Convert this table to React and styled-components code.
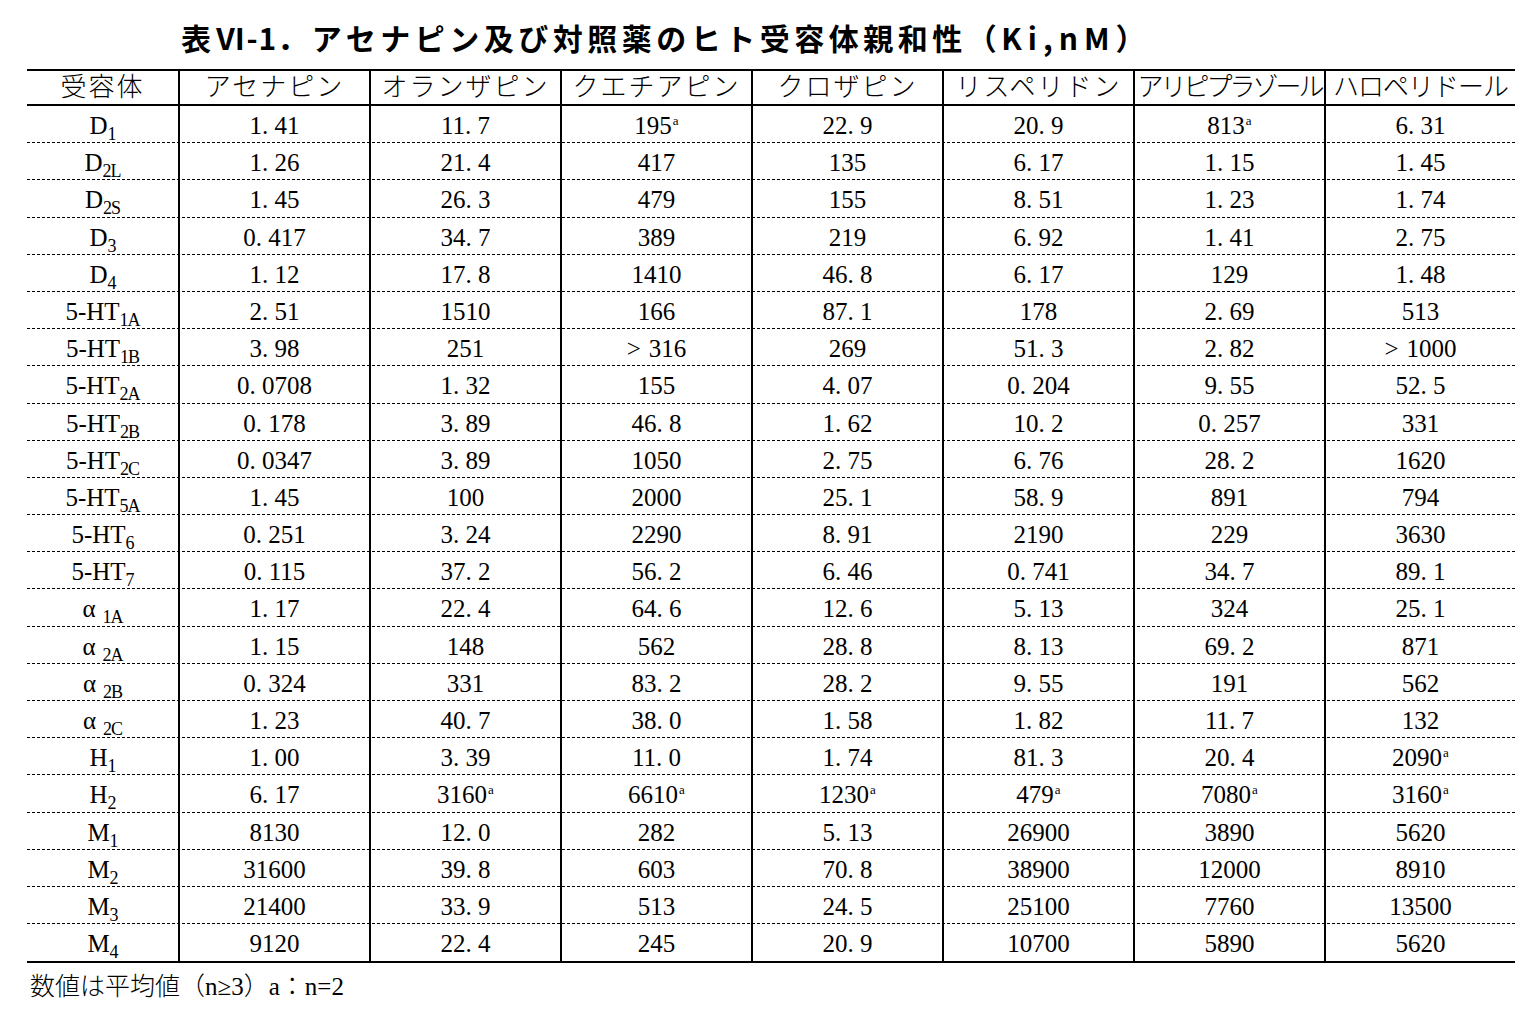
import React from 'react'
import styled, { createGlobalStyle } from 'styled-components'

const GlobalStyle = createGlobalStyle`
  *, *::before, *::after { box-sizing: border-box; }
  html, body {
    margin: 0;
    padding: 0;
    background: #fff;
  }
  body {
    font-family: "Liberation Serif", "Noto Sans CJK JP", serif;
    color: #000;
  }
`

const Page = styled.div`
  width: 1532px;
  height: 1020px;
  padding-left: 27px;
`

const Title = styled.h1`
  margin: 0;
  height: 69px;
  padding-left: 154px;
  font-family: "Noto Sans CJK JP", sans-serif;
  font-weight: 700;
  font-size: 30px;
  letter-spacing: 4.5px;
  line-height: 74px;
  white-space: nowrap;
`

const Latin = styled.span`
  letter-spacing: ${({ $ls }) => $ls}px;
`

const Table = styled.div`
  width: 1488px;
  border-top: 2px solid #000;
  border-bottom: 2px solid #000;
`

const COLS = '151px repeat(7, 1fr)'

const HeadRow = styled.div`
  display: grid;
  grid-template-columns: ${COLS};
  height: 35px;
  border-bottom: 2px solid #000;
`

const Row = styled.div`
  display: grid;
  grid-template-columns: ${COLS};
  height: 37.2px;
  background: ${({ $last }) =>
    $last
      ? 'none'
      : 'linear-gradient(to right, #000 60%, transparent 0) left bottom / 5px 1px repeat-x'};
`

const Cell = styled.div`
  text-align: center;
  white-space: nowrap;
  border-left: ${({ $first }) => ($first ? 'none' : '2px solid #000')};
  font-size: 25px;
  line-height: 39px;
`

const HeadCell = styled(Cell)`
  font-size: 26px;
  font-weight: 300;
  line-height: 33px;
  letter-spacing: ${({ $ls }) => $ls}px;
`

const Sub = styled.sub`
  font-size: 18px;
  line-height: 0;
  vertical-align: -6px;
  letter-spacing: -1px;
  margin-left: ${({ $gap }) => ($gap ? 7 : 0)}px;
`

const Sup = styled.sup`
  font-size: 13px;
  line-height: 0;
  vertical-align: 9px;
  margin-left: 1px;
`

const Dot = styled.span`
  margin-right: 0.25em;
`

const Gt = styled.span`
  margin-right: 8px;
`

const Note = styled.div`
  font-size: 25px;
  font-weight: 300;
  line-height: 48px;
  padding-left: 3px;
`

const heads = [
  { label: '受容体', ls: 2 },
  { label: 'アセナピン', ls: 2 },
  { label: 'オランザピン', ls: 2 },
  { label: 'クエチアピン', ls: 2 },
  { label: 'クロザピン', ls: 2 },
  { label: 'リスペリドン', ls: 2 },
  { label: 'アリピプラゾール', ls: -3 },
  { label: 'ハロペリドール', ls: -1 },
]

const rows = [
  ['D', '1', ['1.41', '11.7', '195a', '22.9', '20.9', '813a', '6.31']],
  ['D', '2L', ['1.26', '21.4', '417', '135', '6.17', '1.15', '1.45']],
  ['D', '2S', ['1.45', '26.3', '479', '155', '8.51', '1.23', '1.74']],
  ['D', '3', ['0.417', '34.7', '389', '219', '6.92', '1.41', '2.75']],
  ['D', '4', ['1.12', '17.8', '1410', '46.8', '6.17', '129', '1.48']],
  ['5-HT', '1A', ['2.51', '1510', '166', '87.1', '178', '2.69', '513']],
  ['5-HT', '1B', ['3.98', '251', '>316', '269', '51.3', '2.82', '>1000']],
  ['5-HT', '2A', ['0.0708', '1.32', '155', '4.07', '0.204', '9.55', '52.5']],
  ['5-HT', '2B', ['0.178', '3.89', '46.8', '1.62', '10.2', '0.257', '331']],
  ['5-HT', '2C', ['0.0347', '3.89', '1050', '2.75', '6.76', '28.2', '1620']],
  ['5-HT', '5A', ['1.45', '100', '2000', '25.1', '58.9', '891', '794']],
  ['5-HT', '6', ['0.251', '3.24', '2290', '8.91', '2190', '229', '3630']],
  ['5-HT', '7', ['0.115', '37.2', '56.2', '6.46', '0.741', '34.7', '89.1']],
  ['α', '1A', ['1.17', '22.4', '64.6', '12.6', '5.13', '324', '25.1']],
  ['α', '2A', ['1.15', '148', '562', '28.8', '8.13', '69.2', '871']],
  ['α', '2B', ['0.324', '331', '83.2', '28.2', '9.55', '191', '562']],
  ['α', '2C', ['1.23', '40.7', '38.0', '1.58', '1.82', '11.7', '132']],
  ['H', '1', ['1.00', '3.39', '11.0', '1.74', '81.3', '20.4', '2090a']],
  ['H', '2', ['6.17', '3160a', '6610a', '1230a', '479a', '7080a', '3160a']],
  ['M', '1', ['8130', '12.0', '282', '5.13', '26900', '3890', '5620']],
  ['M', '2', ['31600', '39.8', '603', '70.8', '38900', '12000', '8910']],
  ['M', '3', ['21400', '33.9', '513', '24.5', '25100', '7760', '13500']],
  ['M', '4', ['9120', '22.4', '245', '20.9', '10700', '5890', '5620']],
]

// "195a" -> 195 with superscript a, ">316" -> > 316
function Value({ v }) {
  let text = v
  const gt = text.startsWith('>')
  if (gt) text = text.slice(1)
  const sup = text.endsWith('a')
  if (sup) text = text.slice(0, -1)
  const [int, frac] = text.split('.')
  return (
    <>
      {gt && <Gt>&gt;</Gt>}
      {int}
      {frac !== undefined && (
        <>
          <Dot>.</Dot>
          {frac}
        </>
      )}
      {sup && <Sup>a</Sup>}
    </>
  )
}

export default function App() {
  return (
    <Page>
      <GlobalStyle />
      <Title>
        表<Latin $ls={1}>Ⅵ-1</Latin>．アセナピン及び対照薬のヒト受容体親和性（
        <Latin $ls={6}>Ki,nM</Latin>）
      </Title>
      <Table>
        <HeadRow>
          {heads.map((h, i) => (
            <HeadCell key={h.label} $first={i === 0} $ls={h.ls}>
              {h.label}
            </HeadCell>
          ))}
        </HeadRow>
        {rows.map(([base, sub, values], r) => (
          <Row key={base + sub} $last={r === rows.length - 1}>
            <Cell $first>
              {base}
              <Sub $gap={base === 'α'}>{sub}</Sub>
            </Cell>
            {values.map((v, i) => (
              <Cell key={i}>
                <Value v={v} />
              </Cell>
            ))}
          </Row>
        ))}
      </Table>
      <Note>数値は平均値（n≥3）a：n=2</Note>
    </Page>
  )
}
